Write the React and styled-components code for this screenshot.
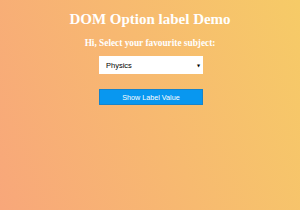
import React, { useState } from "react";
import styled, { createGlobalStyle } from "styled-components";

const GlobalStyle = createGlobalStyle`
  html, body {
    margin: 0;
    padding: 0;
    height: 100%;
  }
  #root {
    height: 100%;
  }
`;

const Page = styled.div`
  box-sizing: border-box;
  height: 210px;
  width: 100%;
  background: linear-gradient(70deg, #f8a77a, #f6cb67);
  display: flex;
  flex-direction: column;
  align-items: center;
  padding-top: 10px;
`;

const Title = styled.h1`
  margin: 0;
  font-family: "Liberation Serif", "Times New Roman", serif;
  font-weight: bold;
  font-size: 15px;
  line-height: 18px;
  color: #ffffff;
`;

const Subtitle = styled.h3`
  margin: 9px 0 0;
  font-family: "Liberation Serif", "Times New Roman", serif;
  font-weight: bold;
  font-size: 9.3px;
  line-height: 12px;
  color: #ffffff;
`;

const SelectWrap = styled.div`
  position: relative;
  margin-top: 7px;
  width: 104px;
  height: 18px;
  margin-left: 2px;
`;

const Select = styled.select`
  appearance: none;
  box-sizing: border-box;
  display: block;
  width: 100%;
  height: 100%;
  border: none;
  outline: none;
  background: #ffffff;
  padding: 0 0 0 7px;
  font-family: "Liberation Sans", Arial, sans-serif;
  font-size: 7.5px;
  color: #000000;
`;

const Arrow = styled.span`
  position: absolute;
  right: 3px;
  top: 50%;
  transform: translateY(-50%);
  font-size: 4px;
  color: #000;
  pointer-events: none;
  font-family: "DejaVu Sans", sans-serif;
`;

const Button = styled.button`
  box-sizing: border-box;
  display: block;
  margin-top: 15px;
  margin-left: 2px;
  width: 104px;
  height: 16px;
  background: #0897f0;
  border: 1px solid rgba(60, 90, 120, 0.3);
  color: #ffffff;
  font-family: "Liberation Sans", Arial, sans-serif;
  font-size: 7.2px;
  padding: 0;
  cursor: pointer;
`;

export default function App() {
  const [subject, setSubject] = useState("physics");
  return (
    <>
      <GlobalStyle />
      <Page>
        <Title>DOM Option label Demo</Title>
        <Subtitle>Hi, Select your favourite subject:</Subtitle>
        <SelectWrap>
          <Select value={subject} onChange={e => setSubject(e.target.value)}>
            <option value="physics">Physics</option>
            <option value="chemistry">Chemistry</option>
            <option value="maths">Maths</option>
          </Select>
          <Arrow>▼</Arrow>
        </SelectWrap>
        <Button>Show Label Value</Button>
      </Page>
    </>
  );
}
